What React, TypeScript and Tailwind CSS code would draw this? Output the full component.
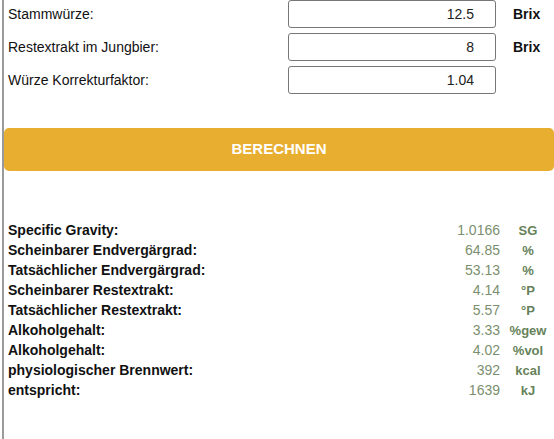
import React from 'react'

const inputs = [
  { label: 'Stammwürze:', value: '12.5', unit: 'Brix' },
  { label: 'Restextrakt im Jungbier:', value: '8', unit: 'Brix' },
  { label: 'Würze Korrekturfaktor:', value: '1.04', unit: '' },
]

const results = [
  { label: 'Specific Gravity:', value: '1.0166', unit: 'SG' },
  { label: 'Scheinbarer Endvergärgrad:', value: '64.85', unit: '%' },
  { label: 'Tatsächlicher Endvergärgrad:', value: '53.13', unit: '%' },
  { label: 'Scheinbarer Restextrakt:', value: '4.14', unit: '°P' },
  { label: 'Tatsächlicher Restextrakt:', value: '5.57', unit: '°P' },
  { label: 'Alkoholgehalt:', value: '3.33', unit: '%gew' },
  { label: 'Alkoholgehalt:', value: '4.02', unit: '%vol' },
  { label: 'physiologischer Brennwert:', value: '392', unit: 'kcal' },
  { label: 'entspricht:', value: '1639', unit: 'kJ' },
]

export default function App() {
  return (
    <div className="w-[554px] h-[439px] overflow-hidden bg-white font-['Liberation_Sans',Arial,sans-serif]">
      <div className="ml-[2px] h-full border-l-2 border-[#9a9a9a]">
        {/* Eingaben */}
        <div className="flex flex-col gap-[5px]">
          {inputs.map((row) => (
            <div key={row.label} className="flex items-center h-[28px]">
              <div className="w-[284px] pl-[4px] text-[14px] text-[#111]">{row.label}</div>
              <input
                readOnly
                value={row.value}
                className="w-[208px] h-[28px] border border-[#777] rounded-[3px] text-right pr-[21px] text-[14px] text-[#222] outline-none"
              />
              <div className="pl-[17px] text-[14px] font-bold text-[#111]">{row.unit}</div>
            </div>
          ))}
        </div>

        <button className="mt-[34px] w-[550px] h-[43px] rounded-[5px] bg-[#e8ae2f] text-white text-[15px] font-bold">
          BERECHNEN
        </button>

        {/* Ergebnisse */}
        <div className="mt-[49px] flex flex-col">
          {results.map((r, i) => (
            <div key={i} className="grid grid-cols-[1fr_96px_52px] h-[20px] items-center">
              <div className="pl-[4px] text-[14px] font-bold text-[#111]">{r.label}</div>
              <div className="text-right pr-[2px] text-[14px] text-[#7b8f6f]">{r.value}</div>
              <div className="text-center text-[13px] font-bold text-[#66825a]">{r.unit}</div>
            </div>
          ))}
        </div>
      </div>
    </div>
  )
}
